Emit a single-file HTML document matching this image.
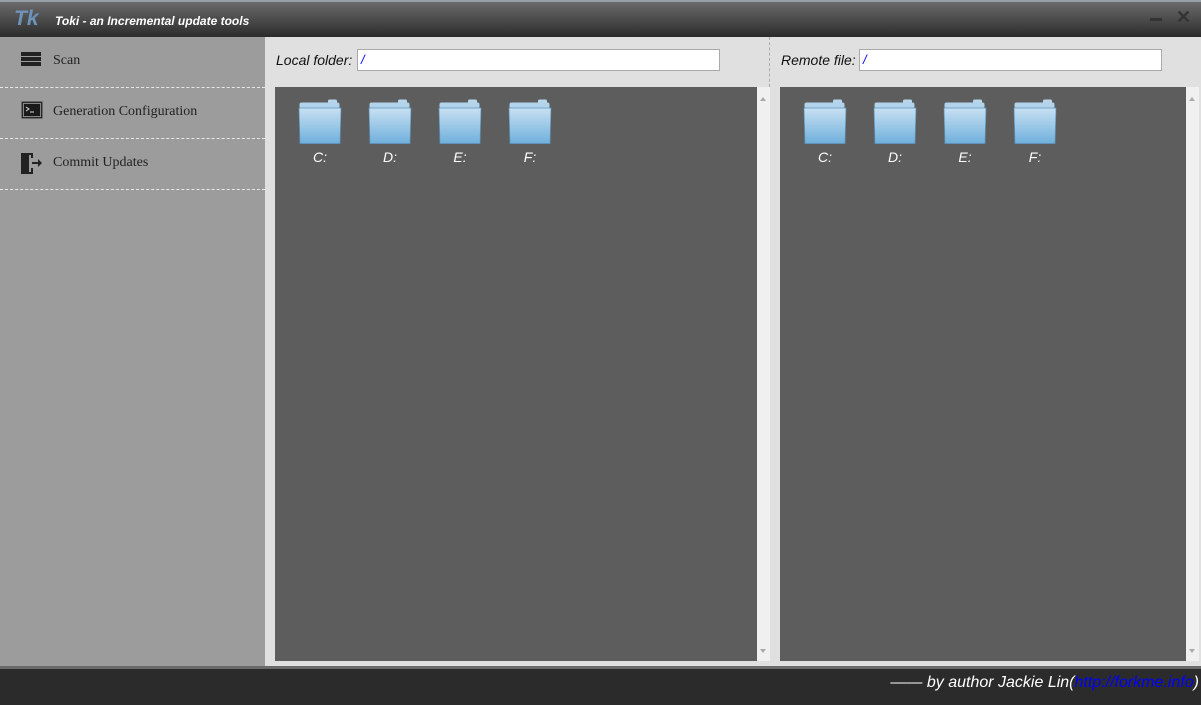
<!DOCTYPE html>
<html><head><meta charset="utf-8"><style>
*{margin:0;padding:0;box-sizing:border-box}
body{width:1201px;height:705px;overflow:hidden;background:#e0e0e0;font-family:"Liberation Sans",sans-serif;position:relative}
.title{position:absolute;left:0;top:0;width:1201px;height:37px;background:linear-gradient(#6a6a6a,#2c2c2c);border-top:2px solid #9aa0a8}
.tk{position:absolute;left:14px;top:5px;font:italic bold 21px "Liberation Sans",sans-serif;color:#6e93bb}
.tt{position:absolute;left:55px;top:12px;font:italic bold 12px "Liberation Sans",sans-serif;color:#fff}
.side{position:absolute;left:0;top:37px;width:265px;height:630px;background:#9c9c9c}
.item{height:51px;border-bottom:1px dashed #e8e8e8;position:relative;font:14px "Liberation Serif",serif;color:#222}
.item span{position:absolute;left:53px;top:16px}
.item svg{position:absolute;left:21px;top:13px}
.lbl{position:absolute;top:52px;font:italic 14px "Liberation Sans",sans-serif;color:#111}
.inp{position:absolute;top:49px;height:22px;background:#fff;border:1px solid #aaa;font:italic 13px "Liberation Sans",sans-serif;color:#00f;padding:2px 3px}
.pane{position:absolute;top:87px;height:574px;background:#5d5d5d}
.sb{position:absolute;top:87px;width:13px;height:574px;background:#f0f0f0}
.sb:before{content:"";position:absolute;left:3px;top:7px;border:3.5px solid transparent;border-bottom:4px solid #aaa}
.sb:after{content:"";position:absolute;left:3px;bottom:5px;border:3.5px solid transparent;border-top:4px solid #aaa}
.f{position:absolute;top:99px;width:44px;height:60px;text-align:center}
.f .lb{position:absolute;top:50px;left:0;width:44px;font:italic 14px "Liberation Sans",sans-serif;color:#fff}
.foot{position:absolute;left:0;top:666px;width:1201px;height:39px;background:#2b2b2b;border-top:3px solid #6a6a6a}
.foot div{position:absolute;right:2px;top:5px;font:italic 16px "Liberation Sans",sans-serif;color:#fff}
</style></head><body>
<div class="title"><div class="tk">Tk</div><div class="tt">Toki - an Incremental update tools</div>
<div style="position:absolute;left:1150px;top:16px;width:12px;height:3px;background:#333"></div>
<div style="position:absolute;left:1176px;top:5px;font:bold 18px 'Liberation Sans';color:#333">✕</div></div>
<div class="side">
<div class="item"><svg width="20" height="16"><rect x="0" y="2" width="20" height="4" fill="#222"/><rect x="0" y="7" width="20" height="4" fill="#222"/><rect x="0" y="12" width="20" height="4" fill="#222"/></svg><span>Scan</span></div>
<div class="item"><svg width="22" height="18"><rect x="1" y="1" width="20" height="16" fill="#222" stroke="#333"/><rect x="2.5" y="2.5" width="17" height="13" fill="#1a1a1a" stroke="#ccc" stroke-width=".6"/><path d="M5 6l3 2-3 2M9 11h4" stroke="#ddd" fill="none" stroke-width="1"/></svg><span>Generation Configuration</span></div>
<div class="item"><svg width="22" height="22"><path d="M0 1h12v5h-2V3H4v17h6v-4h2v6H0z" fill="#222"/><path d="M0 1l8 2v19l-8-1z" fill="#222"/><path d="M11 10h6V7l4 4-4 4v-3h-6z" fill="#222"/></svg><span>Commit Updates</span></div>
</div>
<div style="position:absolute;left:769px;top:37px;height:50px;border-left:1px dashed #aaa"></div>
<div class="lbl" style="left:276px">Local folder:</div><div class="inp" style="left:357px;width:363px">/</div>
<div class="lbl" style="left:781px">Remote file:</div><div class="inp" style="left:859px;width:303px">/</div>
<div class="pane" style="left:275px;width:482px"></div><div class="sb" style="left:757px"></div>
<div class="pane" style="left:780px;width:406px"></div><div class="sb" style="left:1186px"></div>
<svg width="0" height="0" style="position:absolute"><defs><linearGradient id="g" x1="0" y1="0" x2="0" y2="1"><stop offset="0" stop-color="#c8e0f2"/><stop offset="1" stop-color="#6fb0dc"/></linearGradient></defs></svg>
<div id="fs"></div>
<script>
var xs=[298,368,438,508,803,873,943,1013],L=["C:","D:","E:","F:"],h="";
xs.forEach(function(x,i){h+='<div class="f" style="left:'+x+'px"><svg width="44" height="46"><rect x="30" y="0.5" width="9" height="5" rx="1.5" fill="#b8d6ec"/><rect x="1.5" y="3.5" width="40" height="6" rx="2" fill="#b3d3ea"/><path d="M1 9h42l-1 35.5H2z" fill="url(#g)" stroke="#5d95be" stroke-width=".7"/></svg><div class="lb">'+L[i%4]+'</div></div>'});
document.getElementById("fs").innerHTML=h;
</script>
<div class="foot"><div>—— by author Jackie Lin(<span style="color:#00f">http://forkme.info</span>)</div></div>
</body></html>
